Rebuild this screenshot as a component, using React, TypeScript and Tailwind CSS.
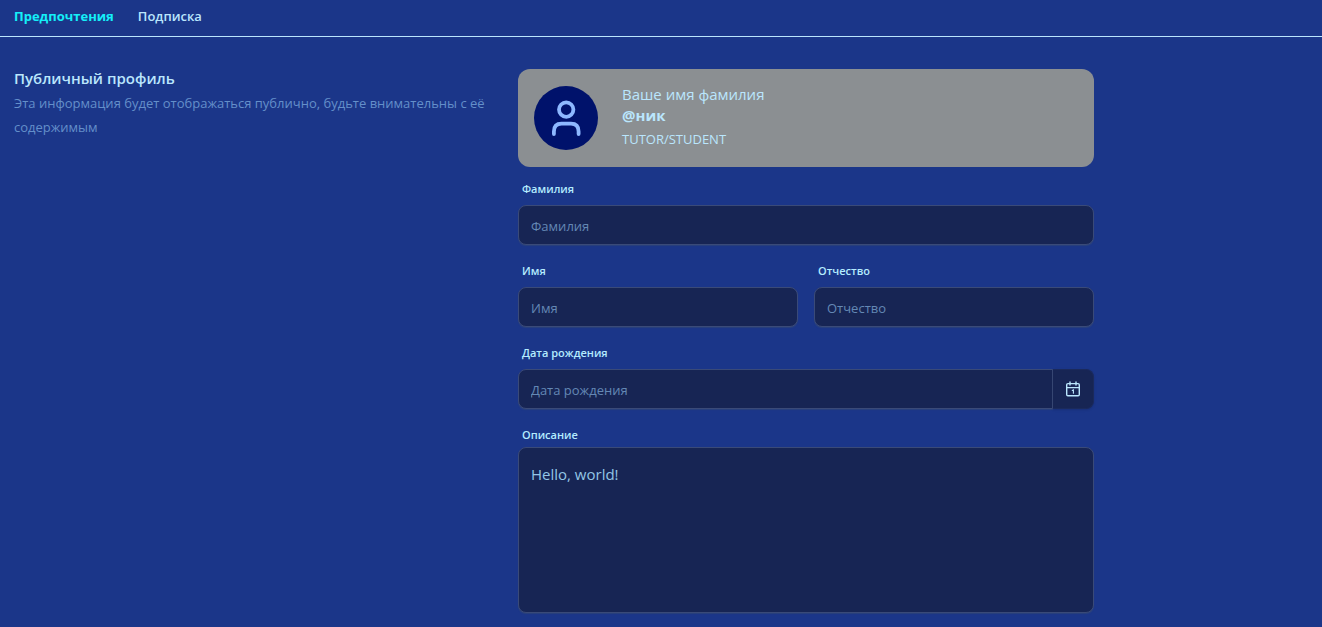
import type { InputHTMLAttributes } from 'react';
import clsx from 'clsx';

const tabs = [
  { href: '#preferences', label: 'Предпочтения', active: true },
  { href: '#subscription', label: 'Подписка', active: false },
];

const labelClass = 'px-1 text-[11px] leading-5 font-semibold text-[#b4ecff]';
const controlClass =
  'w-full border border-[#3a4a78] bg-[#172554] px-3 shadow-[0_1px_1px_#2a417c] outline-none placeholder:text-[#6488b4] placeholder:opacity-100';

function UserIcon() {
  return (
    <svg width="40" height="40" viewBox="0 0 40 40" fill="none" stroke="#8db8ff" strokeWidth="3.8" strokeLinecap="round" aria-hidden="true">
      <circle cx="20.2" cy="11.6" r="7.2" />
      <path d="M7.9 36V33.5C7.9 28 10.5 25.6 15.5 25.6H25C30 25.6 32.6 28 32.6 33.5V36" />
    </svg>
  );
}

function CalendarIcon() {
  return (
    <svg width="16" height="16" viewBox="0 0 16 16" fill="none" stroke="#bae6fd" strokeWidth="1.4" strokeLinecap="round" aria-hidden="true">
      <rect x="1.7" y="2.6" width="12.6" height="12.2" rx="1.2" />
      <path d="M1.7 6.6H14.3M5 0.9V4M11 0.9V4" />
      <path d="M7.2 9.4L8.4 8.9V12.2" strokeWidth="1.1" />
    </svg>
  );
}

type FieldProps = InputHTMLAttributes<HTMLInputElement> & { id: string; label: string };

function Field({ id, label, ...props }: FieldProps) {
  return (
    <div className="flex flex-col gap-1.5">
      <label htmlFor={id} className={labelClass}>{label}</label>
      <input
        id={id}
        type="text"
        placeholder={label}
        className={clsx(controlClass, 'h-10 rounded-lg pt-0.5 text-[13px] text-[#a9e6fb]')}
        {...props}
      />
    </div>
  );
}

function ProfileCard() {
  return (
    <div className="mb-3 flex items-center gap-6 rounded-xl bg-[#8b8f92] p-4">
      <div className="flex size-16 shrink-0 items-center justify-center rounded-full bg-[#00126b]">
        <UserIcon />
      </div>
      <div className="flex flex-col text-[#bae6fd]">
        <span className="text-[15px] leading-[18px]">Ваше имя фамилия</span>
        <span className="text-[15px] leading-6 font-bold">@ник</span>
        <span className="text-[13px] leading-6">TUTOR/STUDENT</span>
      </div>
    </div>
  );
}

export default function App() {
  return (
    <div className="min-h-screen bg-[#1b3689] font-['Open_Sans','Noto_Sans',sans-serif]">
      <nav className="flex gap-6 border-b border-[#bae6fd] px-3.5 pt-1.5 pb-2.5">
        {tabs.map((tab) => (
          <a
            key={tab.href}
            href={tab.href}
            className={clsx('text-[13px] leading-5', tab.active ? 'font-bold text-[#14eff8]' : 'font-semibold text-[#bae6fd]')}
          >
            {tab.label}
          </a>
        ))}
      </nav>

      <main className="flex flex-wrap gap-6 px-3.5 pt-8 pb-3.5">
        <section className="w-[480px]">
          <h2 className="text-[15px] leading-[18px] font-semibold text-[#bae6fd]">Публичный профиль</h2>
          <p className="mt-1 text-[13px] leading-6 text-[#648fca]">
            Эта информация будет отображаться публично, будьте внимательны с её содержимым
          </p>
        </section>

        <form className="max-w-xl flex-1">
          <ProfileCard />

          <div className="flex flex-col gap-4">
            <Field id="surname" label="Фамилия" />

            <div className="grid grid-cols-2 gap-4">
              <Field id="name" label="Имя" />
              <Field id="patronymic" label="Отчество" />
            </div>

            <div className="flex flex-col gap-1.5">
              <label htmlFor="birthday" className={labelClass}>Дата рождения</label>
              <div className="flex">
                <input
                  id="birthday"
                  type="text"
                  placeholder="Дата рождения"
                  className={clsx(controlClass, 'h-10 min-w-0 flex-1 rounded-l-lg pt-0.5 text-[13px] text-[#a9e6fb]')}
                />
                <button
                  type="button"
                  aria-label="Выбрать дату"
                  className="flex h-10 w-[41px] items-center justify-center rounded-r-lg border border-l-0 border-[#1b2a5c] bg-[#172554] shadow-sm"
                >
                  <CalendarIcon />
                </button>
              </div>
            </div>

            <div className="flex flex-col gap-0.5">
              <label htmlFor="description" className={labelClass}>Описание</label>
              <textarea
                id="description"
                defaultValue="Hello, world!"
                className={clsx(controlClass, 'h-[166px] resize-none rounded-lg py-3.5 text-[15px] leading-6 text-[#93c5e6]')}
              />
            </div>
          </div>
        </form>
      </main>
    </div>
  );
}
